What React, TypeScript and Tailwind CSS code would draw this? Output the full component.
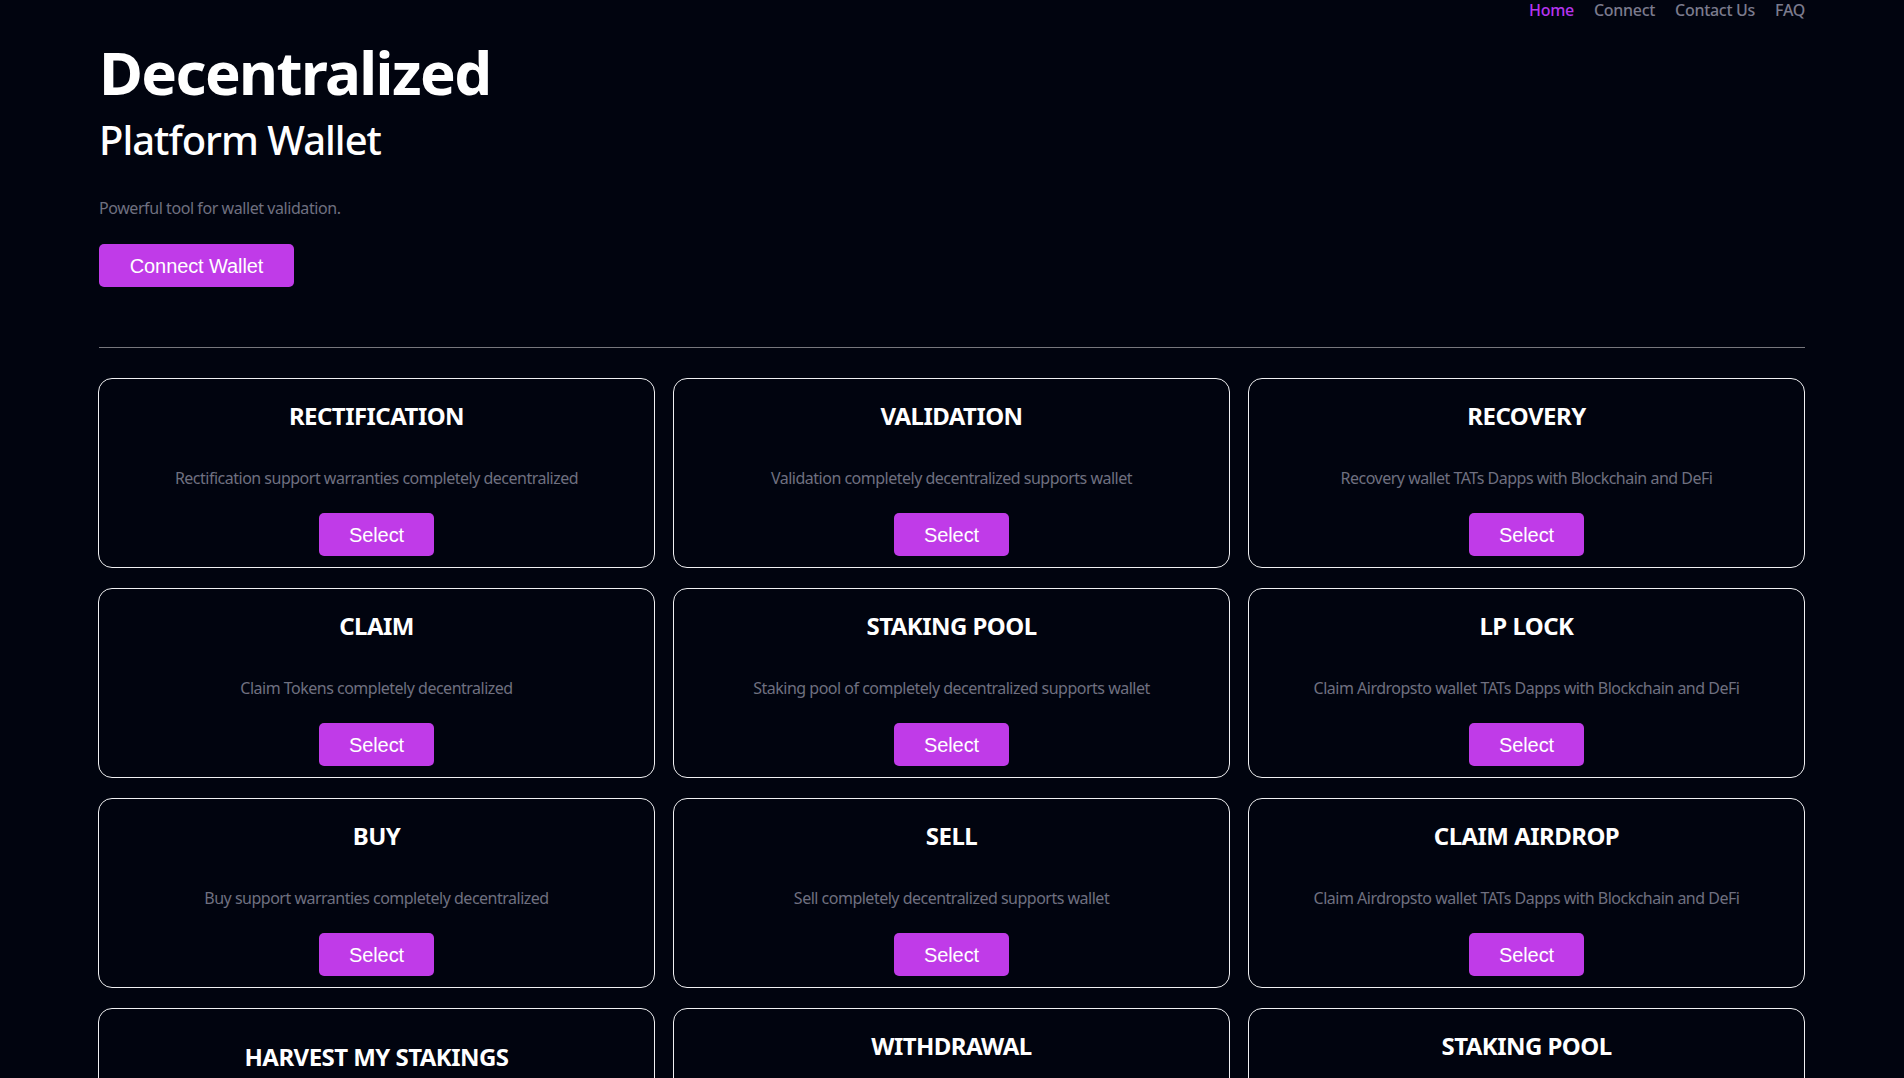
const rows = [
  [
    { t: "RECTIFICATION", d: "Rectification support warranties completely decentralized" },
    { t: "VALIDATION", d: "Validation completely decentralized supports wallet" },
    { t: "RECOVERY", d: "Recovery wallet TATs Dapps with Blockchain and DeFi" },
  ],
  [
    { t: "CLAIM", d: "Claim Tokens completely decentralized" },
    { t: "STAKING POOL", d: "Staking pool of completely decentralized supports wallet" },
    { t: "LP LOCK", d: "Claim Airdropsto wallet TATs Dapps with Blockchain and DeFi" },
  ],
  [
    { t: "BUY", d: "Buy support warranties completely decentralized" },
    { t: "SELL", d: "Sell completely decentralized supports wallet" },
    { t: "CLAIM AIRDROP", d: "Claim Airdropsto wallet TATs Dapps with Blockchain and DeFi" },
  ],
];

const heading = "font-['Noto_Sans','Open_Sans',sans-serif]";
const btn =
  "font-['Liberation_Sans',Arial,sans-serif] bg-[#c03be8] text-white text-[20px] tracking-[-0.1px] h-[43px] rounded-[5px] leading-none";
const cardTitle = "text-[24px] leading-[36px] font-bold text-white tracking-[-0.55px]";
const cardBox = "h-[190px] rounded-[14px] border border-[#f0f0f2] flex flex-col items-center";

function Card({ t, d }: { t: string; d: string }) {
  return (
    <div className={`${cardBox} pt-[19px]`}>
      <h3 className={cardTitle}>{t}</h3>
      <p className="text-[16px] leading-[24px] text-[#6f7080] mt-[32px] tracking-[-0.5px]">{d}</p>
      <button className={`${btn} w-[115px] mt-[23px]`}>Select</button>
    </div>
  );
}

export default function App() {
  return (
    <div className={`${heading} h-[1078px] overflow-hidden bg-[#01040f] pl-[98px] pr-[99px]`}>
      <nav className="flex justify-end gap-[20px] h-[21px] text-[16px] leading-[20px] font-medium text-[#7b7b8d] tracking-[-0.3px]">
        <a className="text-[#b535ee]">Home</a>
        <a>Connect</a>
        <a>Contact Us</a>
        <a>FAQ</a>
      </nav>
      <div className="pl-[1px]">
        <h1 className="text-[60px] leading-[72px] font-bold text-white mt-[15px] tracking-[-1.6px]">Decentralized</h1>
        <h2 className="text-[40px] leading-[48px] font-medium text-white mt-[8px] tracking-[-1px]">Platform Wallet</h2>
        <p className="text-[16px] leading-[24px] text-[#6f7080] mt-[32px] tracking-[-0.43px]">Powerful tool for wallet validation.</p>
        <button className={`${btn} w-[195px] mt-[24px] block`}>Connect Wallet</button>
        <hr className="border-0 border-t border-[#77777d] mt-[60px]" />
      </div>
      <div className="flex flex-col gap-[20px] mt-[30px]">
        {rows.map((r) => (
          <div key={r[0].t} className="grid grid-cols-3 gap-[18px]">
            {r.map((c) => (
              <Card key={c.t} t={c.t} d={c.d} />
            ))}
          </div>
        ))}
        <div className="grid grid-cols-3 gap-[18px]">
          <div className={`${cardBox} pt-[30px]`}>
            <h3 className={cardTitle}>HARVEST MY STAKINGS</h3>
          </div>
          <div className={`${cardBox} pt-[19px]`}>
            <h3 className={cardTitle}>WITHDRAWAL</h3>
          </div>
          <div className={`${cardBox} pt-[19px]`}>
            <h3 className={cardTitle}>STAKING POOL</h3>
          </div>
        </div>
      </div>
    </div>
  );
}
